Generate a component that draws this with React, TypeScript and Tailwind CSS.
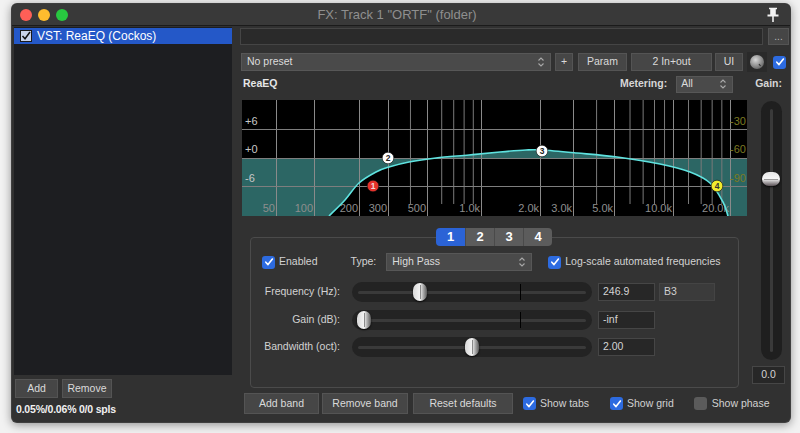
import React from 'react';

const font = { fontFamily: '"Liberation Sans", Arial, sans-serif' };

const anchors: [number, number][] = [
  [50, 34], [100, 72], [200, 117], [300, 146], [500, 185], [1000, 239],
  [2000, 298], [3000, 331], [5000, 372], [10000, 431], [20000, 488],
];

function freqX(f: number) {
  for (let i = 0; i < anchors.length - 1; i++) {
    const [f0, x0] = anchors[i];
    const [f1, x1] = anchors[i + 1];
    if (f >= f0 && f <= f1) {
      const t = Math.log(f / f0) / Math.log(f1 / f0);
      return x0 + t * (x1 - x0);
    }
  }
  return 0;
}

const majors: [number, string][] = [
  [50, '50'], [100, '100'], [200, '200'], [300, '300'], [500, '500'], [1000, '1.0k'],
  [2000, '2.0k'], [3000, '3.0k'], [5000, '5.0k'], [10000, '10.0k'], [20000, '20.0k'],
];
const minors = [400, 600, 700, 800, 900, 4000, 6000, 7000, 8000, 9000, 12000, 14000, 16000, 18000];

const curvePts: [number, number][] = [
  [87, 116], [103, 100], [117, 83], [134, 72], [147, 67], [167, 62], [194, 58], [227, 55],
  [258, 52], [284, 50], [300, 50], [335, 53], [375, 57], [418, 64], [448, 72], [468, 83],
  [481, 102], [486, 116],
];

// catmull-rom -> cubic bezier
function smooth(pts: [number, number][]) {
  let d = '';
  for (let i = 0; i < pts.length - 1; i++) {
    const p0 = pts[i - 1] || pts[i];
    const p1 = pts[i];
    const p2 = pts[i + 1];
    const p3 = pts[i + 2] || p2;
    const c1x = p1[0] + (p2[0] - p0[0]) / 6;
    const c1y = p1[1] + (p2[1] - p0[1]) / 6;
    const c2x = p2[0] - (p3[0] - p1[0]) / 6;
    const c2y = p2[1] - (p3[1] - p1[1]) / 6;
    d += ` C${c1x},${c1y} ${c2x},${c2y} ${p2[0]},${p2[1]}`;
  }
  return d;
}

const curveD = `M${curvePts[0][0]},${curvePts[0][1]}` + smooth(curvePts);
const fillD = `M0,58 L0,116 L87,116` + smooth(curvePts) + ` L505,116 L505,58 Z`;

function EqGraph() {
  const nodes: [number, number, string, string, string][] = [
    [131, 86, '#e5322b', '#f3d6d6', '1'],
    [146, 58, '#ffffff', '#222', '2'],
    [300, 51, '#ffffff', '#222', '3'],
    [475, 86, '#f2ec2e', '#333', '4'],
  ];
  return (
    <svg width="505" height="116" className="block bg-black">
      <path d={fillD} fill="#2c6664" />
      {minors.map(f => (
        <line key={f} x1={freqX(f) + 0.5} x2={freqX(f) + 0.5} y1={0} y2={104} stroke="#7a7a7a" strokeWidth="1" />
      ))}
      {majors.map(([f]) => (
        <line key={f} x1={freqX(f) + 0.5} x2={freqX(f) + 0.5} y1={0} y2={116} stroke="#8a8a8a" strokeWidth="1" />
      ))}
      {[29, 58, 86].map(y => (
        <line key={y} x1={0} x2={505} y1={y + 0.5} y2={y + 0.5} stroke="#7e7e7e" strokeWidth="1" />
      ))}
      <g fontFamily='"Liberation Sans", Arial, sans-serif' fontSize="11">
        <text x="3" y="25" fill="#c8c8c8">+6</text>
        <text x="3" y="53" fill="#c8c8c8">+0</text>
        <text x="3" y="82" fill="#c8c8c8">-6</text>
        <text x="504" y="25" fill="#7d7a22" textAnchor="end">-30</text>
        <text x="504" y="53" fill="#7d7a22" textAnchor="end">-60</text>
        <text x="504" y="82" fill="#7d7a22" textAnchor="end">-90</text>
        {majors.map(([f, l]) => (
          <text key={l} x={freqX(f) - 1} y="112" fill="#8e8e8e" textAnchor="end">{l}</text>
        ))}
      </g>
      <path d={curveD} fill="none" stroke="#5fe3e0" strokeWidth="1.6" />
      {nodes.map(([x, y, bg, fg, n]) => (
        <g key={n}>
          <circle cx={x} cy={y} r="5.8" fill={bg} stroke="#111" strokeWidth="0.6" />
          <text x={x} y={y + 3} fontSize="8.5" fontWeight="bold" fill={fg} textAnchor="middle" fontFamily='"Liberation Sans", Arial, sans-serif'>{n}</text>
        </g>
      ))}
    </svg>
  );
}

function Arrows() {
  return (
    <svg width="8" height="12" viewBox="0 0 8 12" className="shrink-0">
      <path d="M1.5 4.5 L4 2 L6.5 4.5 M1.5 7.5 L4 10 L6.5 7.5" fill="none" stroke="#a8a8a8" strokeWidth="1.1" />
    </svg>
  );
}

function Check({ on = true }: { on?: boolean }) {
  return on ? (
    <div className="w-[13px] h-[13px] rounded-[3px] bg-[#2d6be0] flex items-center justify-center shrink-0">
      <svg width="10" height="10" viewBox="0 0 10 10">
        <path d="M1.8 5.2 L4 7.6 L8.4 2" fill="none" stroke="#fff" strokeWidth="1.6" strokeLinecap="round" strokeLinejoin="round" />
      </svg>
    </div>
  ) : (
    <div className="w-[13px] h-[13px] rounded-[3px] bg-[#5b5b5b] shrink-0" />
  );
}

function Btn({ w, children }: { w: string; children: React.ReactNode }) {
  return (
    <div className={`${w} h-full bg-[#464646] border border-[#545454] text-[#dadada] text-[10.5px] whitespace-nowrap flex items-center justify-center`}>
      {children}
    </div>
  );
}

function HSlider({ thumb, tick }: { thumb: number; tick?: number }) {
  return (
    <div className="relative w-[240px] h-[20px] rounded-full bg-[#232323]">
      <div className="absolute left-[6px] right-[6px] top-[9px] h-[3px] rounded-full bg-[#3a3a3a]" />
      {tick !== undefined && <div className="absolute top-[2px] w-px h-[16px] bg-black" style={{ left: tick }} />}
      <div
        className="absolute top-[1px] w-[14px] h-[18px] rounded-full bg-gradient-to-r from-[#d8d8d8] via-[#f4f4f4] to-[#5e5e5e] shadow-[0_1px_2px_rgba(0,0,0,0.8)]"
        style={{ left: thumb }}
      >
        <div className="absolute left-[7px] top-[2px] w-px h-[14px] bg-[#8a8a8a]" />
      </div>
    </div>
  );
}

function ValBox({ w = 'w-[57px]', children }: { w?: string; children: React.ReactNode }) {
  return (
    <div className={`${w} h-[18px] bg-[#272727] border border-[#464646] text-[#d4d4d4] text-[10.5px] flex items-center pl-[4px]`}>
      {children}
    </div>
  );
}

export default function App() {
  return (
    <div className="w-[800px] h-[433px] bg-[#f2f2f2] pt-[3px] pl-[11px]" style={font}>
      <div className="w-[780px] h-[420px] rounded-[6px] bg-[#313131] flex flex-col overflow-hidden shadow-[0_2px_10px_rgba(0,0,0,0.4)] border border-[#555]/40">
        {/* title bar */}
        <div className="h-[22px] shrink-0 bg-[#393939] border-b border-[#1b1b1b] flex items-center pl-[8px] pr-[8px] relative">
          <div className="flex gap-[6px]">
            <div className="w-[12px] h-[12px] rounded-full bg-[#fe5f57]" />
            <div className="w-[12px] h-[12px] rounded-full bg-[#febc2e]" />
            <div className="w-[12px] h-[12px] rounded-full bg-[#28c840]" />
          </div>
          <div className="flex-1 text-center text-[13px] text-[#8f8f8f] -ml-[40px]">FX: Track 1 "ORTF" (folder)</div>
          <svg width="14" height="16" viewBox="0 0 14 16" className="mr-[2px]">
            <path d="M3 1.5 H11 M5 2 V8 M9 2 V8 M5 2 H9 V8 H5 Z" stroke="#f2f2f2" strokeWidth="1.6" fill="#f2f2f2" />
            <path d="M1.5 8.5 H12.5" stroke="#f2f2f2" strokeWidth="1.8" />
            <path d="M7 9 V15" stroke="#f2f2f2" strokeWidth="1.6" />
          </svg>
        </div>

        <div className="flex flex-1">
          {/* left column */}
          <div className="ml-[2px] w-[218px] pt-[1px] flex flex-col">
            <div className="h-[348px] bg-[#1d1e21] pt-[1px]">
              <div className="h-[16px] bg-[#2458c8] flex items-center pl-[6px] gap-[5px]">
                <div className="w-[12px] h-[12px] bg-[#c9d3ea] border border-[#1a1a1a] flex items-center justify-center">
                  <svg width="10" height="10" viewBox="0 0 10 10">
                    <path d="M1.5 5 L4 7.8 L9 1" fill="none" stroke="#111" strokeWidth="1.5" />
                  </svg>
                </div>
                <span className="text-[12px] text-white">VST: ReaEQ (Cockos)</span>
              </div>
            </div>
            <div className="mt-[4px] h-[19px] flex gap-[4px] pl-[1px]">
              <Btn w="w-[43px]">Add</Btn>
              <Btn w="w-[50px]">Remove</Btn>
            </div>
            <div className="mt-[5px] pl-[2px] text-[10.5px] leading-[13px] text-[#f0f0f0] font-bold tracking-[-0.2px]">0.05%/0.06% 0/0 spls</div>
          </div>

          {/* right column */}
          <div className="ml-[8px] w-[549px] flex flex-col">
            <div className="mt-[2px] h-[17px] flex gap-[5px]">
              <div className="w-[523px] h-full bg-[#2a2a2a] border border-[#454545]" />
              <div className="w-[21px] h-full bg-[#464646] border border-[#545454] text-[#bbb] text-[10px] flex items-center justify-center leading-none">...</div>
            </div>

            <div className="mt-[8px] h-[18px] flex items-center">
              <div className="ml-[1px] w-[310px] h-full bg-[#4a4a4a] border border-[#575757] flex items-center justify-between pl-[5px] pr-[5px] text-[10.5px] text-[#dcdcdc]">
                <span>No preset</span>
                <Arrows />
              </div>
              <div className="ml-[4px] h-full"><Btn w="w-[18px]">+</Btn></div>
              <div className="ml-[5px] h-full"><Btn w="w-[49px]">Param</Btn></div>
              <div className="ml-[4px] h-full"><Btn w="w-[81px]">2 In+out</Btn></div>
              <div className="ml-[3px] h-full"><Btn w="w-[28px]">UI</Btn></div>
              <div className="ml-[4px] w-[20px] h-[20px] bg-[#2a2a2a] flex items-center justify-center">
                <svg width="16" height="16" viewBox="0 0 16 16">
                  <defs>
                    <radialGradient id="kg" cx="40%" cy="35%" r="65%">
                      <stop offset="0" stopColor="#d8d8d8" />
                      <stop offset="1" stopColor="#6c6c6c" />
                    </radialGradient>
                  </defs>
                  <circle cx="8" cy="8" r="7" fill="url(#kg)" />
                  <path d="M10 10 L11.5 12" stroke="#333" strokeWidth="1.2" />
                </svg>
              </div>
              <div className="ml-[6px]"><Check /></div>
            </div>

            <div className="mt-[5px] h-[16px] flex items-center text-[10.5px]">
              <span className="pl-[3px] font-bold text-[#e6e6e6]">ReaEQ</span>
              <span className="flex-1" />
              <span className="font-bold text-[#d6d6d6]">Metering:</span>
              <div className="ml-[9px] w-[57px] h-[17px] bg-[#4a4a4a] border border-[#575757] flex items-center justify-between pl-[4px] pr-[5px] text-[#dcdcdc]">
                <span>All</span>
                <Arrows />
              </div>
              <span className="ml-[22px] mr-[7px] font-bold text-[#d6d6d6]">Gain:</span>
            </div>

            <div className="mt-[8px] flex">
              <div className="ml-[2px] w-[505px] flex flex-col">
                <EqGraph />
                <div className="mt-[12px] ml-[194px] h-[18px] flex relative z-10 text-[13px] font-bold text-white">
                  <div className="w-[29px] h-full rounded-l-[4px] bg-[#2b63d6] flex items-center justify-center">1</div>
                  <div className="w-[29px] h-full bg-[#5c5c5c] border-l border-[#4a4a4a] flex items-center justify-center">2</div>
                  <div className="w-[29px] h-full bg-[#5c5c5c] border-l border-[#4a4a4a] flex items-center justify-center">3</div>
                  <div className="w-[29px] h-full rounded-r-[4px] bg-[#5c5c5c] border-l border-[#4a4a4a] flex items-center justify-center">4</div>
                </div>
                <div className="-mt-[9px] ml-[8px] w-[489px] h-[151px] rounded-[4px] border border-[#4b4b4b] bg-[#333333] flex flex-col pl-[11px] pt-[15px] text-[10.5px] text-[#d2d2d2] whitespace-nowrap">
                  <div className="h-[18px] flex items-center">
                    <Check />
                    <span className="ml-[4px]">Enabled</span>
                    <span className="ml-[33px]">Type:</span>
                    <div className="ml-[10px] w-[146px] h-[18px] bg-[#4a4a4a] border border-[#575757] flex items-center justify-between pl-[5px] pr-[5px] text-[#dcdcdc]">
                      <span>High Pass</span>
                      <Arrows />
                    </div>
                    <div className="ml-[16px]"><Check /></div>
                    <span className="ml-[4px]">Log-scale automated frequencies</span>
                  </div>
                  <div className="mt-[11px] h-[20px] flex items-center">
                    <span className="w-[78px] text-right">Frequency (Hz):</span>
                    <div className="ml-[12px]"><HSlider thumb={61} tick={168} /></div>
                    <div className="ml-[6px]"><ValBox>246.9</ValBox></div>
                    <div className="ml-[4px] w-[56px] h-[18px] bg-[#3b3b3b] border border-[#444] text-[#cfcfcf] text-[10.5px] flex items-center pl-[4px]">B3</div>
                  </div>
                  <div className="mt-[8px] h-[20px] flex items-center">
                    <span className="w-[78px] text-right">Gain (dB):</span>
                    <div className="ml-[12px]"><HSlider thumb={5} tick={168} /></div>
                    <div className="ml-[6px]"><ValBox>-inf</ValBox></div>
                  </div>
                  <div className="mt-[7px] h-[20px] flex items-center">
                    <span className="w-[78px] text-right">Bandwidth (oct):</span>
                    <div className="ml-[12px]"><HSlider thumb={113} /></div>
                    <div className="ml-[6px]"><ValBox>2.00</ValBox></div>
                  </div>
                </div>
              </div>

              <div className="ml-[5px] w-[33px] flex flex-col">
                <div className="ml-[9px] mt-[1px] w-[21px] h-[259px] rounded-full bg-[#1f1f1f] relative">
                  <div className="absolute left-[9px] top-[8px] bottom-[8px] w-[3px] rounded-full bg-[#3a3a3a]" />
                  <div className="absolute left-[1px] top-[71px] w-[18px] h-[14px] rounded-full bg-gradient-to-b from-[#e6e6e6] via-[#f6f6f6] to-[#5c5458] shadow-[0_1px_2px_rgba(0,0,0,0.8)]">
                    <div className="absolute top-[7px] left-[2px] right-[2px] h-px bg-[#9a9a9a]" />
                  </div>
                </div>
                <div className="mt-[6px] w-[33px] h-[18px] bg-[#272727] border border-[#464646] text-[#d4d4d4] text-[10.5px] flex items-center justify-center">0.0</div>
              </div>
            </div>

            <div className="mt-[5px] ml-[4px] h-[21px] flex items-center text-[10.5px] text-[#d2d2d2] whitespace-nowrap">
              <Btn w="w-[75px]">Add band</Btn>
              <div className="ml-[3px] h-full"><Btn w="w-[86px]">Remove band</Btn></div>
              <div className="ml-[5px] h-full"><Btn w="w-[100px]">Reset defaults</Btn></div>
              <div className="ml-[10px]"><Check /></div>
              <span className="ml-[4px]">Show tabs</span>
              <div className="ml-[21px]"><Check /></div>
              <span className="ml-[4px]">Show grid</span>
              <div className="ml-[20px]"><Check on={false} /></div>
              <span className="ml-[5px]">Show phase</span>
            </div>
          </div>
        </div>
      </div>
    </div>
  );
}
